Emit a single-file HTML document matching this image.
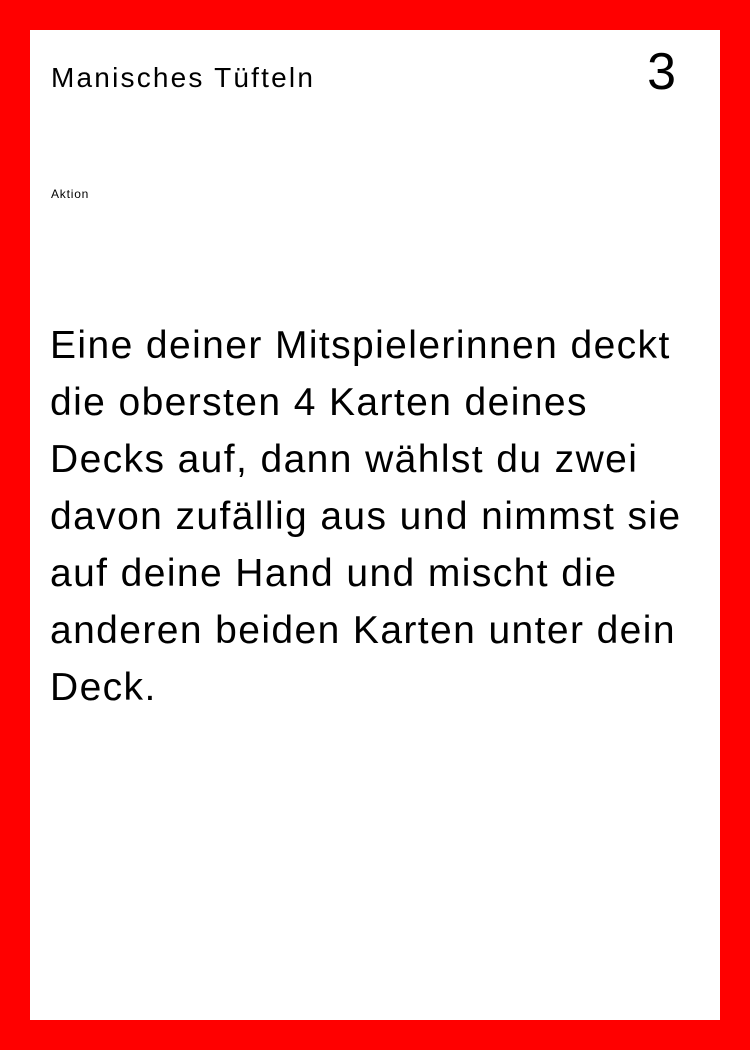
<!DOCTYPE html>
<html><head><meta charset="utf-8"><style>
html,body{margin:0;padding:0;}
body{width:750px;height:1050px;background:#ff0000;position:relative;overflow:hidden;font-family:"Liberation Sans","DejaVu Sans",sans-serif;color:#000;}
.card{position:absolute;left:30px;top:30px;width:690px;height:990px;background:#fff;}
.title{position:absolute;left:21px;top:32px;font-size:28px;letter-spacing:2.2px;white-space:nowrap;}
.num{position:absolute;right:44px;top:12px;font-size:52px;}
.type{position:absolute;left:21px;top:157px;font-size:12px;letter-spacing:0.8px;}
.body{position:absolute;left:20px;top:287px;font-size:39px;line-height:57px;letter-spacing:1.4px;white-space:nowrap;}
</style></head><body>
<div class="card">
<div class="title">Manisches Tüfteln</div>
<div class="num">3</div>
<div class="type">Aktion</div>
<div class="body">Eine deiner Mitspielerinnen deckt<br>die obersten 4 Karten deines<br>Decks auf, dann wählst du zwei<br>davon zufällig aus und nimmst sie<br>auf deine Hand und mischt die<br>anderen beiden Karten unter dein<br>Deck.</div>
</div>
</body></html>
